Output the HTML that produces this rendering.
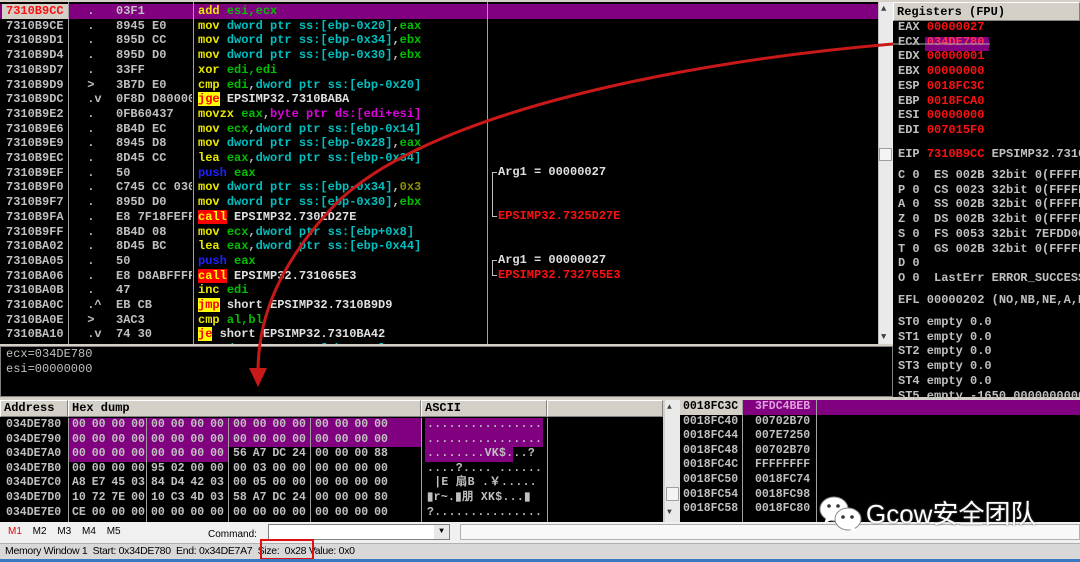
<!DOCTYPE html>
<html><head><meta charset="utf-8"><style>
*{margin:0;padding:0;box-sizing:border-box}
body{width:1080px;height:562px;background:#d4d0c8;position:relative;overflow:hidden;font-family:"Liberation Mono",monospace;font-size:12px;font-weight:bold;color:#c0c0c0}
.a{position:absolute;white-space:pre}
.blk{position:absolute;background:#000}
.y{color:#e8e800}.g{color:#00c000}.c{color:#00c0c0}.m{color:#e000e0}.b{color:#2020ff}.o{color:#909000}.w{color:#e0e0e0}.red{color:#ff1010}
.call{background:#ff0000;color:#ffff00}.jx{background:#ffff00;color:#ff0000}
.vl{position:absolute;background:#a0a0a0;width:1px}
.hd{position:absolute;background:#d4d0c8;color:#000;border:1px solid #fff;border-right-color:#808080;border-bottom-color:#808080;font-size:12px;line-height:15px;padding-left:3px}
</style></head><body>
<div class="blk" style="left:0;top:2px;width:878px;height:342px"></div>
<div class="a" style="left:0;top:4px;width:878px;height:14.7px;background:#800080"></div>
<div class="a" style="left:2px;top:4px;width:66px;height:14.7px;background:#d4d0c8"></div>
<div class="vl" style="left:68px;top:2px;height:342px"></div>
<div class="vl" style="left:193px;top:2px;height:342px"></div>
<div class="vl" style="left:487px;top:2px;height:342px"></div>
<div class="a" style="left:0;top:4px;width:878px;height:340px;overflow:hidden">
<div style="position:absolute;left:6px;top:0;line-height:14.7px"><span class="red">7310B9CC</span>
7310B9CE
7310B9D1
7310B9D4
7310B9D7
7310B9D9
7310B9DC
7310B9E2
7310B9E6
7310B9E9
7310B9EC
7310B9EF
7310B9F0
7310B9F7
7310B9FA
7310B9FF
7310BA02
7310BA05
7310BA06
7310BA0B
7310BA0C
7310BA0E
7310BA10
7310BA12</div>
<div style="position:absolute;left:80px;top:0;line-height:14.7px;white-space:pre;width:112px;overflow:hidden"> .   03F1
 .   8945 E0
 .   895D CC
 .   895D D0
 .   33FF
 >   3B7D E0
 .v  0F8D D8000000
 .   0FB60437
 .   8B4D EC
 .   8945 D8
 .   8D45 CC
 .   50
 .   C745 CC 03000000
 .   895D D0
 .   E8 7F18FEFF
 .   8B4D 08
 .   8D45 BC
 .   50
 .   E8 D8ABFFFF
 .   47
 .^  EB CB
 >   3AC3
 .v  74 30
 .   8B45 08</div>
<div style="position:absolute;left:198px;top:0;line-height:14.7px;white-space:pre"><span class="y">add</span> <span class="g">esi,ecx</span>
<span class="y">mov</span> <span class="c">dword ptr ss:[ebp-0x20]</span>,<span class="g">eax</span>
<span class="y">mov</span> <span class="c">dword ptr ss:[ebp-0x34]</span>,<span class="g">ebx</span>
<span class="y">mov</span> <span class="c">dword ptr ss:[ebp-0x30]</span>,<span class="g">ebx</span>
<span class="y">xor</span> <span class="g">edi,edi</span>
<span class="y">cmp</span> <span class="g">edi</span>,<span class="c">dword ptr ss:[ebp-0x20]</span>
<span class="jx">jge</span> <span class="w">EPSIMP32.7310BABA</span>
<span class="y">movzx</span> <span class="g">eax</span>,<span class="m">byte ptr ds:[edi+esi]</span>
<span class="y">mov</span> <span class="g">ecx</span>,<span class="c">dword ptr ss:[ebp-0x14]</span>
<span class="y">mov</span> <span class="c">dword ptr ss:[ebp-0x28]</span>,<span class="g">eax</span>
<span class="y">lea</span> <span class="g">eax</span>,<span class="c">dword ptr ss:[ebp-0x34]</span>
<span class="b">push</span> <span class="g">eax</span>
<span class="y">mov</span> <span class="c">dword ptr ss:[ebp-0x34]</span>,<span class="o">0x3</span>
<span class="y">mov</span> <span class="c">dword ptr ss:[ebp-0x30]</span>,<span class="g">ebx</span>
<span class="call">call</span> <span class="w">EPSIMP32.730ED27E</span>
<span class="y">mov</span> <span class="g">ecx</span>,<span class="c">dword ptr ss:[ebp+0x8]</span>
<span class="y">lea</span> <span class="g">eax</span>,<span class="c">dword ptr ss:[ebp-0x44]</span>
<span class="b">push</span> <span class="g">eax</span>
<span class="call">call</span> <span class="w">EPSIMP32.731065E3</span>
<span class="y">inc</span> <span class="g">edi</span>
<span class="jx">jmp</span> <span class="w">short EPSIMP32.7310B9D9</span>
<span class="y">cmp</span> <span class="g">al,bl</span>
<span class="jx">je</span> <span class="w">short EPSIMP32.7310BA42</span>
<span class="y">mov</span> <span class="c">dword ptr ss:[ebp+0x8]</span></div>
</div>
<div class="a w" style="left:498px;top:165px;line-height:14.7px">Arg1 = 00000027</div>
<div class="a red" style="left:498px;top:209px;line-height:14.7px">EPSIMP32.7325D27E</div>
<div class="a w" style="left:498px;top:253px;line-height:14.7px">Arg1 = 00000027</div>
<div class="a red" style="left:498px;top:268px;line-height:14.7px">EPSIMP32.732765E3</div>
<div class="a" style="left:492px;top:172px;width:5px;height:45px;border-left:1px solid #c0c0c0;border-top:1px solid #c0c0c0;border-bottom:1px solid #c0c0c0"></div>
<div class="a" style="left:492px;top:260px;width:5px;height:16px;border-left:1px solid #c0c0c0;border-top:1px solid #c0c0c0;border-bottom:1px solid #c0c0c0"></div>
<div class="a" style="left:878px;top:2px;width:15px;height:342px;background:#eaeaea;border-left:1px solid #c0c0c0"></div>
<div class="a" style="left:879px;top:148px;width:13px;height:13px;background:#f4f4f4;border:1px solid #a0a0a0"></div>
<div class="a" style="left:881px;top:4px;font-size:9px;color:#404040">▲</div>
<div class="a" style="left:881px;top:332px;font-size:9px;color:#404040">▼</div>
<div class="blk" style="left:893px;top:2px;width:187px;height:395px"></div>
<div class="hd" style="left:893px;top:2px;width:187px;height:19px;line-height:18px">Registers (FPU)</div>
<div class="a" style="left:925px;top:37px;width:64px;height:14px;background:#800080"></div>
<div class="a" style="left:898px;top:20px;line-height:14.7px"><span>EAX <span class="red">00000027</span>
ECX <span style="color:#ff3050">034DE780</span>
EDX <span class="red">00000001</span>
EBX <span class="red">00000000</span>
ESP <span class="red">0018FC3C</span>
EBP <span class="red">0018FCA0</span>
ESI <span class="red">00000000</span>
EDI <span class="red">007015F0</span></span></div>
<div class="a" style="left:898px;top:147px;line-height:14.7px">EIP <span class="red">7310B9CC</span> EPSIMP32.7310B9CC</div>
<div class="a" style="left:898px;top:168px;line-height:14.7px">C 0  ES 002B 32bit 0(FFFFFFFF)
P 0  CS 0023 32bit 0(FFFFFFFF)
A 0  SS 002B 32bit 0(FFFFFFFF)
Z 0  DS 002B 32bit 0(FFFFFFFF)
S 0  FS 0053 32bit 7EFDD000(FFF)
T 0  GS 002B 32bit 0(FFFFFFFF)
D 0
O 0  LastErr ERROR_SUCCESS</div>
<div class="a" style="left:898px;top:293px">EFL 00000202 (NO,NB,NE,A,NS,PO)</div>
<div class="a" style="left:898px;top:315px;line-height:14.7px">ST0 empty 0.0
ST1 empty 0.0
ST2 empty 0.0
ST3 empty 0.0
ST4 empty 0.0
ST5 empty -1650.0000000000</div>
<div class="blk" style="left:0;top:346px;width:893px;height:51px;border:1px solid #808080"></div>
<div class="a" style="left:6px;top:347px;line-height:14.5px;font-weight:normal">ecx=034DE780
esi=00000000</div>
<div class="blk" style="left:0;top:400px;width:663px;height:122px"></div>
<div class="hd" style="left:0;top:400px;width:68px;height:17px">Address</div>
<div class="hd" style="left:68px;top:400px;width:353px;height:17px">Hex dump</div>
<div class="hd" style="left:421px;top:400px;width:126px;height:17px">ASCII</div>
<div class="hd" style="left:547px;top:400px;width:116px;height:17px"></div>
<div class="a" style="left:68px;top:418px;width:353px;height:29px;background:#800080"></div>
<div class="a" style="left:68px;top:447px;width:160px;height:15px;background:#800080"></div>
<div class="a" style="left:425px;top:418px;width:118px;height:29px;background:#800080"></div>
<div class="a" style="left:425px;top:447px;width:88px;height:15px;background:#800080"></div>
<div class="vl" style="left:68px;top:418px;height:104px"></div>
<div class="vl" style="left:146px;top:418px;height:104px"></div>
<div class="vl" style="left:228px;top:418px;height:104px"></div>
<div class="vl" style="left:310px;top:418px;height:104px"></div>
<div class="vl" style="left:421px;top:418px;height:104px"></div>
<div class="vl" style="left:547px;top:418px;height:104px"></div>
<div class="a" style="left:6px;top:418px;line-height:14.6px;font-size:11.5px">034DE780
034DE790
034DE7A0
034DE7B0
034DE7C0
034DE7D0
034DE7E0</div>
<div class="a" style="left:72px;top:418px;line-height:14.6px;font-size:11.5px;word-spacing:-1px">00 00 00 00
00 00 00 00
00 00 00 00
00 00 00 00
A8 E7 45 03
10 72 7E 00
CE 00 00 00</div>
<div class="a" style="left:151px;top:418px;line-height:14.6px;font-size:11.5px;word-spacing:-1px">00 00 00 00
00 00 00 00
00 00 00 00
95 02 00 00
84 D4 42 03
10 C3 4D 03
00 00 00 00</div>
<div class="a" style="left:233px;top:418px;line-height:14.6px;font-size:11.5px;word-spacing:-1px">00 00 00 00
00 00 00 00
56 A7 DC 24
00 03 00 00
00 05 00 00
58 A7 DC 24
00 00 00 00</div>
<div class="a" style="left:315px;top:418px;line-height:14.6px;font-size:11.5px;word-spacing:-1px">00 00 00 00
00 00 00 00
00 00 00 88
00 00 00 00
00 00 00 00
00 00 00 80
00 00 00 00</div>
<div class="a" style="left:427px;top:418px;line-height:14.6px;font-size:11.5px;font-family:'Liberation Mono','Noto Sans CJK SC',monospace;letter-spacing:0.3px">................
................
........VK$...?
....?.... ......
 |E 扇B .￥.....
▮r~.▮朋 XK$...▮
?...............</div>
<div class="a" style="left:665px;top:400px;width:15px;height:122px;background:#eaeaea"></div>
<div class="a" style="left:667px;top:403px;font-size:8px;color:#404040">▲</div>
<div class="a" style="left:667px;top:508px;font-size:8px;color:#404040">▼</div>
<div class="a" style="left:666px;top:487px;width:13px;height:14px;background:#f4f4f4;border:1px solid #a0a0a0"></div>
<div class="blk" style="left:680px;top:400px;width:400px;height:122px"></div>
<div class="a" style="left:680px;top:400px;width:62px;height:14.6px;background:#d4d0c8"></div>
<div class="a" style="left:742px;top:400px;width:338px;height:14.6px;background:#800080"></div>
<div class="vl" style="left:742px;top:400px;height:122px"></div>
<div class="vl" style="left:816px;top:400px;height:122px"></div>
<div class="a" style="left:683px;top:400px;line-height:14.6px;font-size:11.5px"><span style="color:#000">0018FC3C</span>
0018FC40
0018FC44
0018FC48
0018FC4C
0018FC50
0018FC54
0018FC58</div>
<div class="a" style="left:755px;top:400px;line-height:14.6px;font-size:11.5px"><span style="color:#e0a0e0">3FDC4BEB</span>
00702B70
007E7250
00702B70
FFFFFFFF
0018FC74
0018FC98
0018FC80</div>
<div class="a" style="left:0;top:522px;width:1080px;height:21px;background:#f0f0f0"></div>
<div class="a" style="left:8px;top:526px;font-family:'Liberation Sans',sans-serif;font-size:10px;font-weight:normal;color:#000;word-spacing:8px"><span style="color:#e00">M1</span> M2 M3 M4 M5</div>
<div class="a" style="left:208px;top:529px;font-family:'Liberation Sans',sans-serif;font-size:10px;font-weight:normal;color:#000">Command:</div>
<div class="a" style="left:268px;top:524px;width:182px;height:16px;background:#fff;border:1px solid #808080"></div>
<div class="a" style="left:434px;top:525px;width:15px;height:14px;background:#e8e8e8;font-size:8px;color:#000;text-align:center;line-height:14px">▼</div>
<div class="a" style="left:460px;top:524px;width:620px;height:16px;background:#f8f8f8;border:1px solid #b0b0b0"></div>
<div class="a" style="left:0;top:543px;width:1080px;height:17px;background:#d8d8d8;border-top:1px solid #b0b0b0"></div>
<div class="a" style="left:5px;top:545px;font-family:'Liberation Sans',sans-serif;font-size:10.5px;font-weight:normal;color:#000;letter-spacing:-0.3px">Memory Window 1  Start: 0x34DE780  End: 0x34DE7A7  Size:  0x28 Value: 0x0</div>
<div class="a" style="left:260px;top:539px;width:54px;height:21px;border:2px solid #e01010"></div>
<div class="a" style="left:0;top:559px;width:1080px;height:3px;background:#3a78c0"></div>
<svg class="a" style="left:818px;top:493px" width="46" height="42" viewBox="0 0 46 42">
<ellipse cx="16" cy="16" rx="14" ry="12" fill="#fff" stroke="#888" stroke-width="1"/>
<path d="M8 25 L6 31 L13 27Z" fill="#fff"/>
<circle cx="11" cy="13" r="1.8" fill="#333"/><circle cx="20" cy="13" r="1.8" fill="#333"/>
<ellipse cx="30" cy="26" rx="13" ry="11" fill="#fff" stroke="#888" stroke-width="1"/>
<path d="M36 34 L40 40 L31 36Z" fill="#fff"/>
<circle cx="25" cy="24" r="1.8" fill="#333"/><circle cx="34" cy="24" r="1.8" fill="#333"/>
</svg>
<div class="a" style="left:866px;top:499px;font-family:'Liberation Sans','Noto Sans CJK SC',sans-serif;font-weight:normal;font-size:26px;line-height:30px;color:#fff;text-shadow:0 0 2px #555">Gcow安全团队</div>
<svg class="a" style="left:0;top:0" width="1080" height="562">
<line x1="893" y1="44" x2="990" y2="44" stroke="#aaa" stroke-width="1"/>
<path d="M893 44 C700 60 420 110 330 210 C270 275 258 330 258 372" fill="none" stroke="#c81818" stroke-width="3"/>
<path d="M249 368 L258 387 L267 368 Z" fill="#c81818"/>
</svg>
</body></html>
